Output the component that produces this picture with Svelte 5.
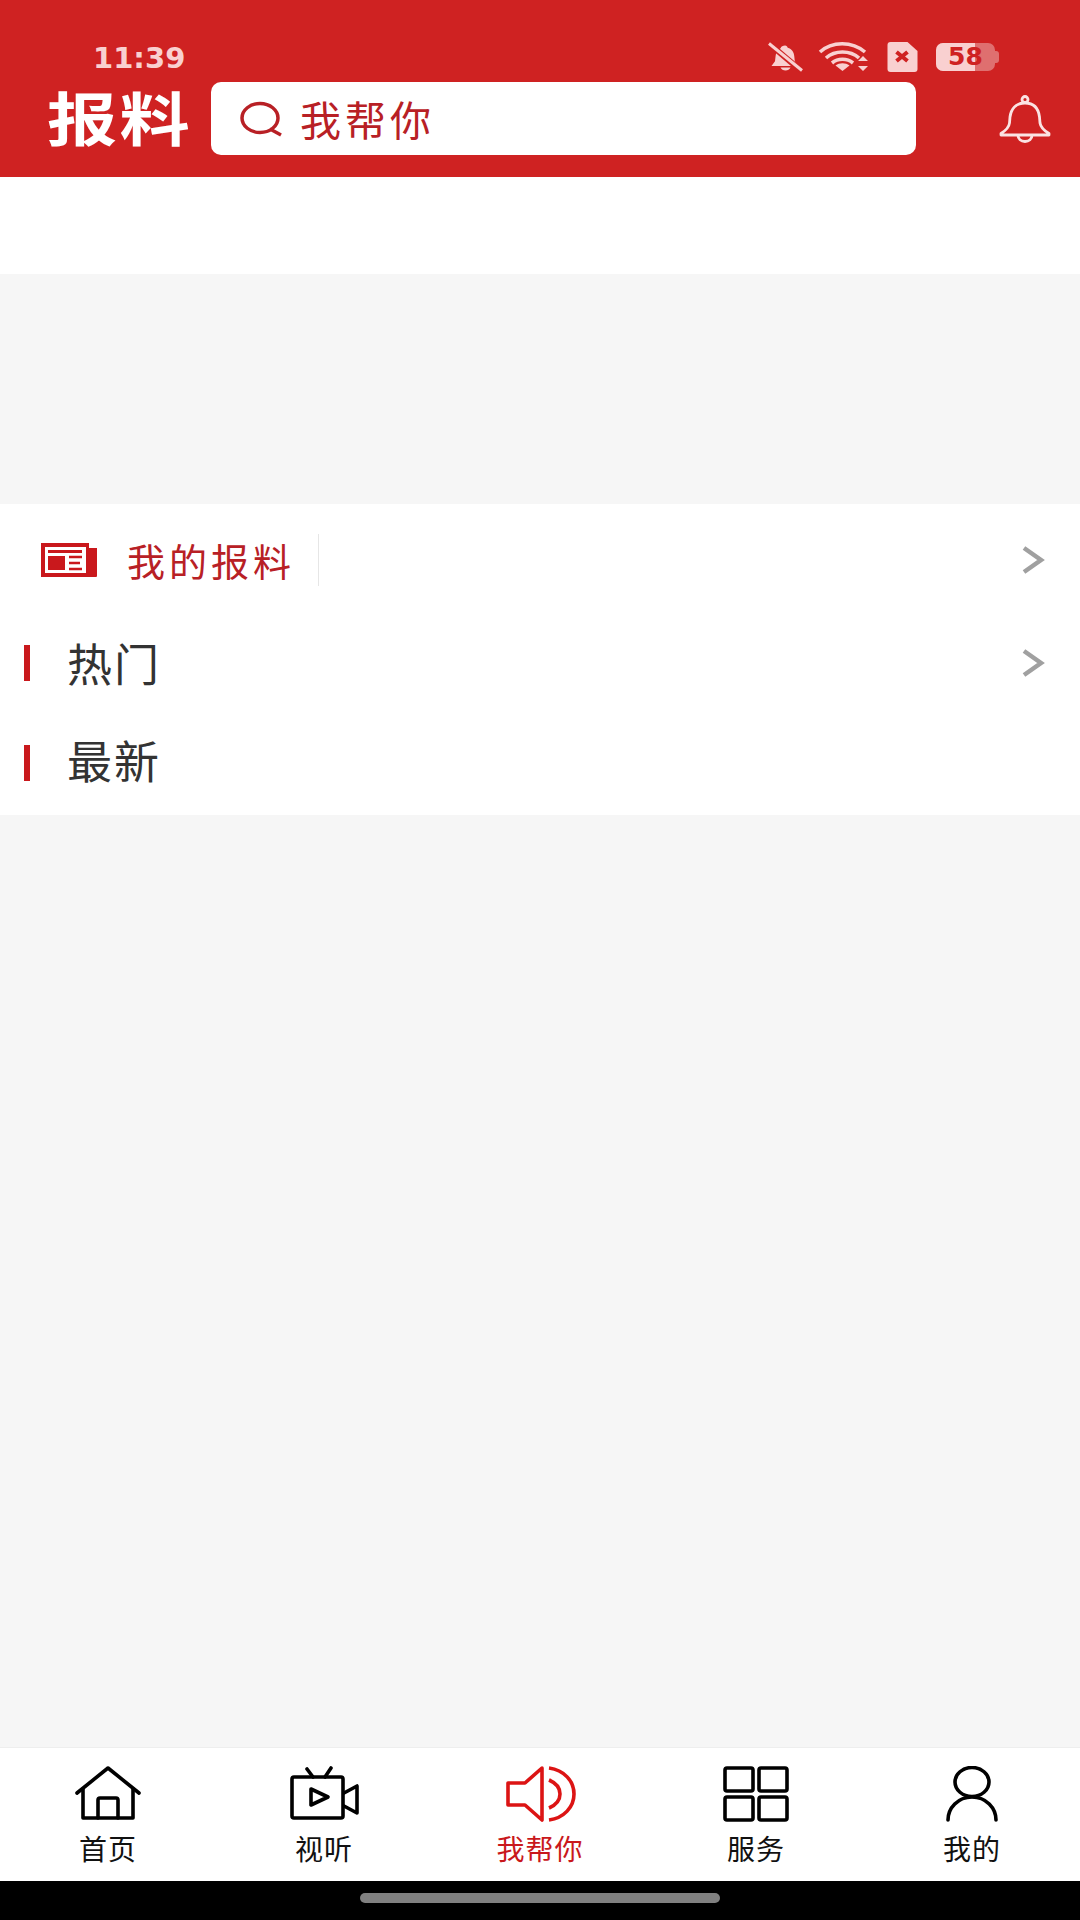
<script>
  const tabs = [
    { label: '首页', icon: 'home' },
    { label: '视听', icon: 'video' },
    { label: '我帮你', icon: 'speaker', active: true },
    { label: '服务', icon: 'grid' },
    { label: '我的', icon: 'user' }
  ];
</script>

<div class="page">
  <header class="top">
    <div class="status">
      <span class="time">11:39</span>
      <div class="status-icons">
        <svg class="mute" width="36" height="33" viewBox="0 0 36 30">
          <path d="M17 3c1.500 0 2.500 1 2.700 2.300 4.300 1.200 6.300 4.600 6.600 8.700l.5 4.700 3.200 4.800H3.500l3.500-4.800.6-5.200c.3-3 1.700-6 5-7.800C13 4 15 3 17 3z" fill="#f9d0d0"/>
          <path d="M12.500 25h10c-.8 2-2.800 3-5 3s-4.200-1-5-3z" fill="#f9d0d0"/>
          <path d="M1 1l33 28" stroke="#cf2222" stroke-width="6"/>
          <path d="M1 1l33 27" stroke="#f9d0d0" stroke-width="3"/>
        </svg>
        <svg width="52" height="32" viewBox="0 0 52 32">
          <g fill="none" stroke="#f9d0d0" stroke-width="3.600">
            <path d="M2 11C14 0 34 0 47 11"/>
            <path d="M8 17c9-8 24-8 33 0"/>
            <path d="M14 22c6-5 15-5 21 0"/>
          </g>
          <path d="M24.500 30l-7-5.500c4-3 10-3 14 0z" fill="#f9d0d0"/>
          <path d="M45 15l5 5H40zM45 30l-5-5h10z" fill="#f9d0d0"/>
        </svg>
        <svg width="31" height="30" viewBox="0 0 30 30">
          <path d="M3 0h17l10 9v18a3 3 0 0 1-3 3H3a3 3 0 0 1-3-3V3a3 3 0 0 1 3-3z" fill="#f9d0d0"/>
          <path d="M9 10l11 9M20 10L9 19" stroke="#cf2222" stroke-width="4"/>
        </svg>
        <div class="battery">
          <div class="battery-body">
            <span class="battery-fill"></span>
            <span class="battery-num">58</span>
          </div>
          <span class="battery-nub"></span>
        </div>
      </div>
    </div>
    <div class="search-row">
      <h1 class="title">报料</h1>
      <div class="search">
        <svg width="44" height="36" viewBox="0 0 44 36">
          <ellipse cx="20" cy="17" rx="18" ry="14.500" fill="none" stroke="#b82025" stroke-width="3.500"/>
          <path d="M30 28l11 6" stroke="#b82025" stroke-width="3.500"/>
        </svg>
        <span>我帮你</span>
      </div>
      <svg class="bell" width="52" height="48" viewBox="0 0 52 48">
        <g fill="none" stroke="#fbe3e3" stroke-width="2.800" stroke-linejoin="round">
          <circle cx="26" cy="4.500" r="3"/>
          <path d="M26 8c-9 0-14 6-15 14l-.5 6c-.3 3-3 7-8.500 10.500V40h48v-1.500C44 35 41.500 31 41 28l-.5-6C39.500 14 35 8 26 8z"/>
          <path d="M19 40c0 4 3 6.500 7 6.500s7-2.500 7-6.500"/>
        </g>
      </svg>
    </div>
  </header>

  <div class="blank"></div>
  <div class="banner"></div>

  <section class="list">
    <div class="mine">
      <svg width="58" height="36" viewBox="0 0 58 36">
        <path d="M1 1h48v5h8v28a1 1 0 0 1-1 1H1z" fill="#c9181c"/>
        <rect x="5" y="5" width="41" height="26" fill="#fff"/>
        <rect x="8" y="8" width="34" height="3" fill="#c9181c"/>
        <rect x="8" y="14" width="17" height="14" fill="#c9181c"/>
        <path d="M29 15h13M29 21h11M29 27h13" stroke="#c9181c" stroke-width="2.500"/>
      </svg>
      <span class="mine-text">我的报料</span>
      <span class="divider"></span>
      <svg class="chevron" width="24" height="30" viewBox="0 0 24 30"><path d="M3 3l17 12L3 27" fill="none" stroke="#a0a0a0" stroke-width="4.500"/></svg>
    </div>
    <div class="topic hot">
      <i></i><span>热门</span>
      <svg class="chevron" width="24" height="30" viewBox="0 0 24 30"><path d="M3 3l17 12L3 27" fill="none" stroke="#a0a0a0" stroke-width="4.500"/></svg>
    </div>
    <div class="topic latest">
      <i></i><span>最新</span>
    </div>
  </section>

  <div class="fill"></div>

  <nav class="tabs">
    {#each tabs as tab}
      <div class="tab" class:active={tab.active}>
        <svg width="72" height="56" viewBox="0 0 72 56" fill="none" stroke={tab.active ? '#dc1414' : '#000'} stroke-width="3.600" stroke-linejoin="round" stroke-linecap="round">
          {#if tab.icon === 'home'}
            <path d="M5 27L36 2l31 25"/>
            <path d="M11 23v29h50V23"/>
            <path d="M26 52V34a2 2 0 0 1 2-2h16a2 2 0 0 1 2 2v18"/>
          {:else if tab.icon === 'video'}
            <rect x="4" y="11" width="51" height="41" rx="2"/>
            <path d="M56 27l13-7v27l-13-7M19 3l6 8M43 2l-6 9"/>
            <path d="M23 23l17 8-17 8z"/>
          {:else if tab.icon === 'speaker'}
            <path d="M38 2L21 17H4v22h17l17 15z"/>
            <path d="M45 14c7 3 11 8 11 14s-4 11-11 14" stroke-linecap="butt"/>
            <path d="M45 2c15 2 25 13 25 26S60 52 45 54" stroke-linecap="butt"/>
          {:else if tab.icon === 'grid'}
            <rect x="5" y="2" width="28" height="23" rx="2"/>
            <rect x="39" y="2" width="28" height="23" rx="2"/>
            <rect x="5" y="31" width="28" height="23" rx="2"/>
            <rect x="39" y="31" width="28" height="23" rx="2"/>
          {:else}
            <ellipse cx="36" cy="16" rx="17" ry="14.500"/>
            <path d="M12 54c0-12 10-23 24-23s24 11 24 23"/>
          {/if}
        </svg>
        <span>{tab.label}</span>
      </div>
    {/each}
  </nav>

  <div class="home-area"><span class="home-bar"></span></div>
</div>

<style>
  :global(body) {
    margin: 0;
    background: #f6f6f6;
  }

  .page {
    width: 1080px;
    height: 1920px;
    display: flex;
    flex-direction: column;
    font-family: "Noto Sans CJK SC", "Noto Sans", sans-serif;
  }

  .top {
    height: 177px;
    flex: none;
    background: #cf2222;
    box-sizing: border-box;
    padding-top: 39px;
  }

  .status {
    height: 43px;
    display: flex;
    align-items: flex-start;
    justify-content: space-between;
    padding: 0 81px 0 93px;
  }

  .time {
    font-family: "DejaVu Sans", sans-serif;
    font-weight: 700;
    font-size: 29px;
    color: #f9d0d0;
    line-height: 34px;
    margin-top: 2px;
  }

  .status-icons {
    display: flex;
    align-items: center;
    gap: 17px;
    height: 36px;
  }

  .mute {
    margin-right: -3px;
  }

  .battery {
    display: flex;
    align-items: center;
    margin-left: 1px;
  }

  .battery-body {
    width: 59px;
    height: 28px;
    border-radius: 7px;
    background: #df6f6f;
    position: relative;
    overflow: hidden;
    text-align: center;
  }

  .battery-nub {
    width: 4px;
    height: 12px;
    border-radius: 0 3px 3px 0;
    background: #df6f6f;
  }

  .battery-fill {
    position: absolute;
    left: 0;
    top: 0;
    bottom: 0;
    width: 39px;
    background: #f9d0d0;
  }

  .battery-num {
    position: relative;
    font-family: "DejaVu Sans", sans-serif;
    font-weight: 700;
    font-size: 25px;
    line-height: 28px;
    color: #cf2222;
    display: block;
  }

  .search-row {
    height: 73px;
    display: flex;
    align-items: center;
  }

  .title {
    margin: 0 0 0 47px;
    width: 164px;
    flex: none;
    font-size: 58px;
    line-height: 68px;
    height: 73px;
    font-weight: 700;
    letter-spacing: 2px;
    color: #fff;
    transform: scaleX(1.21);
    transform-origin: left center;
  }

  .search {
    width: 705px;
    height: 73px;
    flex: none;
    box-sizing: border-box;
    background: #fff;
    border-radius: 10px;
    display: flex;
    align-items: center;
    padding-left: 29px;
    gap: 16px;
    font-size: 41px;
    letter-spacing: 4px;
    color: #b82025;
  }

  .search span {
    margin-bottom: 2px;
  }

  .bell {
    margin-left: 83px;
  }

  .blank {
    height: 97px;
    flex: none;
    background: #fff;
  }

  .banner {
    height: 230px;
    flex: none;
    background: #f6f6f6;
  }

  .list {
    height: 311px;
    flex: none;
    background: #fff;
    box-sizing: border-box;
    padding-top: 30px;
  }

  .mine {
    height: 52px;
    display: flex;
    align-items: center;
    padding-left: 40px;
    padding-right: 35px;
  }

  .mine-text {
    margin-left: 29px;
    font-size: 38px;
    letter-spacing: 4px;
    color: #b82025;
    margin-bottom: 2px;
  }

  .divider {
    width: 1px;
    height: 52px;
    background: #e6e6e6;
    margin-left: 23px;
  }

  .chevron {
    margin-left: auto;
  }

  .topic {
    height: 96px;
    display: flex;
    align-items: center;
    padding-left: 24px;
    padding-right: 35px;
    font-size: 45px;
    letter-spacing: 2px;
    color: #333;
  }

  .topic.hot {
    margin-top: 29px;
  }

  .topic.hot span {
    margin-bottom: 2px;
  }

  .topic.latest {
    margin-top: 4px;
  }

  .topic.latest span {
    margin-bottom: 8px;
  }

  .topic i {
    width: 6px;
    height: 36px;
    background: #c9181c;
    margin-right: 37px;
  }

  .fill {
    flex: 1;
    background: #f6f6f6;
  }

  .tabs {
    height: 134px;
    flex: none;
    display: grid;
    grid-template-columns: repeat(5, 1fr);
    background: #fff;
    border-top: 1px solid #eee;
    box-sizing: border-box;
  }

  .tab {
    display: flex;
    flex-direction: column;
    align-items: center;
    padding-top: 18px;
    font-size: 28px;
    letter-spacing: 1px;
    line-height: 36px;
    color: #111;
  }

  .tab svg {
    margin-bottom: 8px;
  }

  .tab.active {
    color: #c9181c;
  }

  .home-area {
    height: 39px;
    flex: none;
    background: #000;
    display: flex;
    justify-content: center;
    padding-top: 12px;
    box-sizing: border-box;
  }

  .home-bar {
    width: 360px;
    height: 10px;
    border-radius: 5px;
    background: #808080;
  }
</style>
